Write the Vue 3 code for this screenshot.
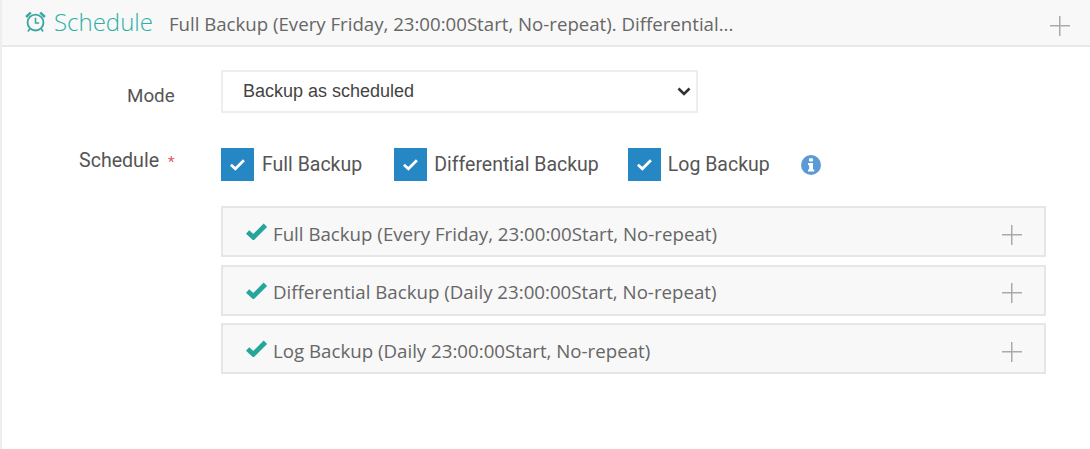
<script setup>
const checks = [
  { label: 'Full Backup' },
  { label: 'Differential Backup' },
  { label: 'Log Backup' }
];

const plans = [
  'Full Backup (Every Friday, 23:00:00Start, No-repeat)',
  'Differential Backup (Daily 23:00:00Start, No-repeat)',
  'Log Backup (Daily 23:00:00Start, No-repeat)'
];
</script>

<template>
  <div class="page">
    <header class="head">
      <svg class="clock" viewBox="0 0 22 22" width="23" height="23">
        <circle cx="11" cy="12" r="7.6" fill="none" stroke="#3aa7a0" stroke-width="1.8" />
        <path d="M11 7.5V12.5H14.5" fill="none" stroke="#3aa7a0" stroke-width="1.5" />
        <path d="M1.2 5.8L5.6 1.6L7.4 3.2L2.8 7.6ZM20.8 5.8L16.4 1.6L14.6 3.2L19.2 7.6Z" fill="#3aa7a0" />
        <path d="M5.6 18L3.8 20.6M16.4 18L18.2 20.6" stroke="#3aa7a0" stroke-width="1.6" />
      </svg>
      <span class="title">Schedule</span>
      <span class="summary">Full Backup (Every Friday, 23:00:00Start, No-repeat). Differential...</span>
      <span class="plus head-plus"></span>
    </header>

    <div class="form">
      <div class="row mode-row">
        <label class="label mode-label">Mode</label>
        <div class="select-wrap">
          <select class="select">
            <option>Backup as scheduled</option>
          </select>
          <svg class="chevron" viewBox="0 0 14 9" width="14" height="9">
            <path d="M1.5 1.5L7 7L12.5 1.5" fill="none" stroke="#333" stroke-width="2.6" />
          </svg>
        </div>
      </div>

      <div class="row schedule-row">
        <label class="label schedule-label">Schedule <i>*</i></label>
        <div class="body">
          <div class="checks">
            <div v-for="c in checks" :key="c.label" class="check">
              <span class="box">
                <svg viewBox="0 0 16 12" width="17" height="13">
                  <path d="M1.8 6.2L6 10L14 2" fill="none" stroke="#fff" stroke-width="2.6" />
                </svg>
              </span>
              <span class="check-text">{{ c.label }}</span>
            </div>
            <svg class="info" viewBox="0 0 20 20" width="20" height="20">
              <circle cx="10" cy="10" r="10" fill="#5b9bd5" />
              <rect x="8" y="3.2" width="4" height="3.4" rx="1" fill="#fff" />
              <path d="M7 8H12V14.4H13.2V16.6H7V14.4H8.2V10.2H7Z" fill="#fff" />
            </svg>
          </div>

          <div class="plans">
            <div v-for="p in plans" :key="p" class="plan">
              <svg class="tick" viewBox="0 0 22 17" width="23" height="18">
                <path d="M2.5 9.5L8 14.5L19.5 3" fill="none" stroke="#26a69a" stroke-width="4.6" />
              </svg>
              <span class="plan-text">{{ p }}</span>
              <span class="plus"></span>
            </div>
          </div>
        </div>
      </div>
    </div>
  </div>
</template>

<style scoped>
.page {
  width: 1090px;
  height: 449px;
  overflow: hidden;
  box-sizing: border-box;
  border-left: 2px solid #eeeeee;
  background: #fff;
  color: #555;
}

.head {
  display: flex;
  align-items: center;
  height: 47px;
  box-sizing: border-box;
  padding-left: 22px;
  padding-bottom: 2px;
  background: #f8f8f8;
  border-bottom: 2px solid #e8e8e8;
  font-family: "Open Sans", sans-serif;
}

.clock {
  margin-right: 7px;
}

.title {
  font-size: 24px;
  font-weight: 300;
  color: #2bb0a6;
  margin-right: 16px;
}

.summary {
  font-size: 18.65px;
  font-weight: 400;
  color: #666;
  margin-top: 3px;
}

.plus {
  display: block;
  width: 20px;
  height: 20px;
  margin-left: auto;
  flex: none;
  background:
    linear-gradient(#aaa, #aaa) center / 100% 1.5px no-repeat,
    linear-gradient(#aaa, #aaa) center / 1.5px 100% no-repeat;
}

.head-plus {
  margin-right: 20px;
  margin-top: 8px;
}

.form {
  font-family: Roboto, sans-serif;
}

.row {
  display: flex;
}

.label {
  width: 219px;
  flex: none;
  box-sizing: border-box;
  color: #555;
}

.mode-row {
  margin-top: 23px;
}

.mode-label {
  padding: 14.5px 0 0 125px;
  font-size: 18.8px;
}

.schedule-label {
  padding: 1px 0 0 77px;
  font-size: 19.6px;
}

.schedule-label i {
  font-style: normal;
  font-size: 15px;
  color: #e8555a;
  margin-left: 4px;
}

.select-wrap {
  position: relative;
  width: 477px;
  height: 43px;
}

.select {
  display: block;
  width: 100%;
  height: 100%;
  box-sizing: border-box;
  padding: 0 0 2px 20px;
  border: 2px solid #eeeeee;
  border-radius: 0;
  background: #fff;
  color: #444;
  font-family: "Liberation Sans", sans-serif;
  font-size: 18px;
  outline: none;
  appearance: none;
}

.chevron {
  position: absolute;
  right: 7px;
  top: 17px;
}

.schedule-row {
  margin-top: 35px;
}

.body {
  width: 825px;
}

.checks {
  display: flex;
  align-items: center;
  font-size: 19.5px;
  color: #555;
}

.check {
  display: flex;
  align-items: center;
  gap: 7px;
  margin-right: 31px;
}

.check:first-child {
  margin-right: 32px;
}

.check:nth-child(2) {
  margin-right: 29px;
}

.check-text {
  margin-top: -1px;
}

.check:first-child .check-text {
  margin-left: 1px;
}

.box {
  display: flex;
  align-items: center;
  justify-content: center;
  width: 33px;
  height: 33px;
  background: #2587c4;
}

.plans {
  display: flex;
  flex-direction: column;
  gap: 7.6px;
  margin-top: 25px;
}

.plan {
  display: flex;
  align-items: center;
  height: 51px;
  box-sizing: border-box;
  padding: 0 22px;
  border: 2px solid #e6e6e6;
  background: #f8f8f8;
  font-family: "Open Sans", sans-serif;
  font-size: 18.7px;
  color: #666;
}

.tick {
  margin: -1px 5px 0 0;
}

.plan-text {
  margin-top: 3px;
}

.plan .plus {
  margin-top: 6px;
}
</style>
